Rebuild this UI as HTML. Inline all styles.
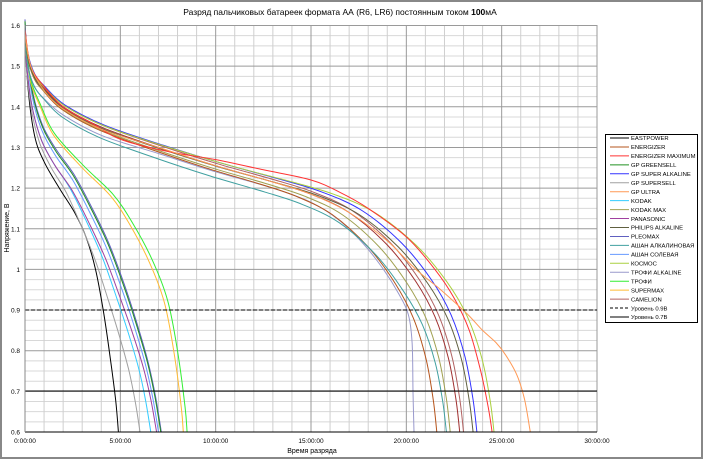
<!DOCTYPE html>
<html><head><meta charset="utf-8">
<style>
html,body{margin:0;padding:0;background:#fff;}
body{width:704px;height:460px;overflow:hidden;font-family:"Liberation Sans",sans-serif;}
</style></head>
<body>
<svg id="s" width="704" height="460" xmlns="http://www.w3.org/2000/svg" font-family="Liberation Sans, sans-serif">
<rect x="1" y="1" width="701" height="457" fill="#fff" stroke="#888" stroke-width="2"/>
<text x="340" y="15" font-size="8.5" text-anchor="middle" fill="#000">Разряд пальчиковых батареек формата АА (R6, LR6) постоянным током <tspan font-weight="bold">100</tspan>мА</text>
<g id="grid"></g>
<g id="curves"></g>
<line x1="25" y1="310" x2="597" y2="310" stroke="#000" stroke-width="1" stroke-dasharray="4,2"/>
<line x1="25" y1="391" x2="597" y2="391" stroke="#000" stroke-width="1"/>
<line x1="25" y1="432" x2="597" y2="432" stroke="#000" stroke-width="1"/>
<line x1="25" y1="25" x2="25" y2="432" stroke="#888" stroke-width="1"/>
<g id="labels" font-size="6.5" fill="#000"></g>
<text x="312" y="453" font-size="7" text-anchor="middle">Время разряда</text>
<text transform="translate(9,228) rotate(-90)" font-size="7" text-anchor="middle">Напряжение, В</text>
<rect x="605.5" y="134.5" width="92" height="188" fill="#fff" stroke="#000" stroke-width="1"/>
<g id="legend" font-size="5.9" fill="#000"></g>
</svg>
<script>
var NS="http://www.w3.org/2000/svg";
function X(h){return 25+h*19.067;}
function Y(v){return 675.9-406.5*v;}
function el(p,tag,a,txt){var e=document.createElementNS(NS,tag);for(var k in a)e.setAttribute(k,a[k]);if(txt!=null)e.textContent=txt;document.getElementById(p).appendChild(e);return e;}
for(var i=1;i<40;i++){var v=0.6+i*0.025;if(i%4==0)continue;el('grid','line',{x1:25,x2:597,y1:Y(v),y2:Y(v),stroke:'#d8d8d8','stroke-width':1});}
for(var h=1;h<=30;h++){if(h%5==0)continue;el('grid','line',{x1:X(h),x2:X(h),y1:25,y2:432,stroke:'#cfcfcf','stroke-width':1});}
for(var i=0;i<=10;i++){var v=0.6+i*0.1;el('grid','line',{x1:25,x2:597,y1:Y(v),y2:Y(v),stroke:'#9a9a9a','stroke-width':1});}
for(var h=5;h<=30;h+=5){el('grid','line',{x1:X(h),x2:X(h),y1:25,y2:432,stroke:'#9a9a9a','stroke-width':1});}
var yl=['0.6','0.7','0.8','0.9','1','1.1','1.2','1.3','1.4','1.5','1.6'];
for(var i=0;i<=10;i++){el('labels','text',{x:20,y:Y(0.6+i*0.1)+2.5,'text-anchor':'end'},yl[i]);}
var xl=['0:00:00','5:00:00','10:00:00','15:00:00','20:00:00','25:00:00','30:00:00'];
for(var i=0;i<7;i++){el('labels','text',{x:X(i*5),y:443,'text-anchor':'middle'},xl[i]);}
var LT=[[0,1.585],[0.15,1.52],[0.5,1.47],[1,1.44],[2,1.395],[4,1.345],[7,1.295],[10,1.25],[13,1.21],[15,1.18],[17,1.135],[19,1.055],[20.5,0.965],[21.5,0.88],[22.2,0.78],[22.6,0.68],[22.8,0.6]];
var ST=[[0,1.58],[0.1,1.5],[0.4,1.4],[0.9,1.32],[1.6,1.26],[2.5,1.2],[3.4,1.12],[4.3,1.03],[5.1,0.93],[5.7,0.85],[6.3,0.76],[6.7,0.68],[7,0.6]];
function scale(t,T,dv,T0){return t.map(function(p){return [p[0]*T/T0,Math.max(0.6,p[1]+dv*(p[1]>0.95?1:Math.max(0,(p[1]-0.6)/0.35)))];});}
var C=[];
C.push(['#000',[[0,1.58],[0.15,1.45],[0.5,1.33],[1,1.265],[1.8,1.2],[2.6,1.14],[3.2,1.08],[3.7,1.0],[4.1,0.9],[4.45,0.79],[4.75,0.68],[4.9,0.6]]]);
C.push(['#a0a0a0',scale(ST,6.03,-0.01,7)]);
C.push(['#33ccff',scale(ST,6.6,0,7)]);
C.push(['#a040a0',scale(ST,6.9,-0.005,7)]);
C.push(['#6699ff',scale(ST,7.0,0.02,7)]);
C.push(['#6060c0',scale(ST,7.15,0.035,7)]);
C.push(['#209020',scale(ST,7.12,0.03,7)]);
var MT=[[0,1.55],[0.3,1.46],[0.8,1.4],[1.5,1.33],[3,1.25],[4.5,1.18],[5.5,1.11],[6.5,1.02],[7.3,0.92],[7.8,0.8],[8.2,0.66],[8.3,0.6]];
C.push(['#ffbb33',MT]);
C.push(['#33ee33',scale(MT,8.5,0.005,8.3)]);
C.push(['#9999cc',[[0,1.57],[0.15,1.5],[0.5,1.45],[1,1.42],[2,1.38],[4,1.33],[7,1.285],[10,1.24],[13,1.2],[15,1.165],[16.5,1.12],[17.8,1.06],[18.8,1.0],[19.6,0.94],[20.1,0.89],[20.3,0.82],[20.35,0.7],[20.4,0.6]]]);
C.push(['#b5541c',scale(LT,21.6,0,22.8)]);
C.push(['#40a0a0',scale(LT,22.1,-0.02,22.8)]);
C.push(['#a0a050',scale(LT,22.3,0.0,22.8)]);
C.push(['#a03030',scale(LT,22.8,0.005,22.8)]);
C.push(['#b06060',scale(LT,23.0,0.01,22.8)]);
C.push(['#606040',scale(LT,23.5,0.0,22.8)]);
C.push(['#3333ff',scale(LT,23.7,0.01,22.8)]);
C.push(['#aad040',scale(LT,24.6,0.005,22.8)]);
C.push(['#ff3333',[[0,1.59],[0.3,1.5],[1,1.45],[2,1.4],[3.5,1.36],[5,1.32],[7.5,1.29],[10,1.27],[12.5,1.245],[15,1.22],[16.5,1.19],[18,1.15],[20,1.08],[21.5,1.0],[22.5,0.93],[23.3,0.85],[23.9,0.75],[24.3,0.66],[24.5,0.6]]]);
C.push(['#ff9955',[[0,1.58],[0.3,1.5],[1,1.44],[2,1.395],[4,1.345],[7,1.3],[10,1.255],[13,1.215],[15,1.185],[17,1.14],[19,1.07],[20.5,1.0],[21.8,0.95],[23.2,0.89],[24,0.85],[24.7,0.82],[25.2,0.79],[25.8,0.74],[26.2,0.68],[26.5,0.6]]]);
C.forEach(function(c){
  var P=c[1].map(function(p){return [X(p[0]),Y(p[1])];});
  var d='M'+P[0][0].toFixed(1)+' '+P[0][1].toFixed(1);
  for(var i=0;i<P.length-1;i++){
    var p0=P[i-1]||P[i],p1=P[i],p2=P[i+1],p3=P[i+2]||P[i+1];
    var c1=[p1[0]+(p2[0]-p0[0])/6,p1[1]+(p2[1]-p0[1])/6];
    var c2=[p2[0]-(p3[0]-p1[0])/6,p2[1]-(p3[1]-p1[1])/6];
    d+='C'+c1[0].toFixed(1)+' '+c1[1].toFixed(1)+' '+c2[0].toFixed(1)+' '+c2[1].toFixed(1)+' '+p2[0].toFixed(1)+' '+p2[1].toFixed(1);
  }
  el('curves','path',{d:d,fill:'none',stroke:c[0],'stroke-width':1});
});
var L=[['EASTPOWER','#000'],['ENERGIZER','#b5541c'],['ENERGIZER MAXIMUM','#ff3333'],['GP GREENSELL','#209020'],['GP SUPER ALKALINE','#3333ff'],['GP SUPERSELL','#a0a0a0'],['GP ULTRA','#ff9955'],['KODAK','#33ccff'],['KODAK MAX','#a0a050'],['PANASONIC','#a040a0'],['PHILIPS ALKALINE','#606040'],['PLEOMAX','#6060c0'],['АШАН АЛКАЛИНОВАЯ','#40a0a0'],['АШАН СОЛЕВАЯ','#6699ff'],['КОСМОС','#aad040'],['ТРОФИ ALKALINE','#9999cc'],['ТРОФИ','#33ee33'],['SUPERMAX','#ffbb33'],['CAMELION','#b06060'],['Уровень 0.9В','#000',1],['Уровень 0.7В','#000']];
L.forEach(function(l,i){var y=138+i*8.95;el('legend','line',{x1:610,x2:629,y1:y,y2:y,stroke:l[1],'stroke-width':1,'stroke-dasharray':l[2]?'3,2':'none'});el('legend','text',{x:631,y:y+2.2},l[0]);});
</script>
</body></html>
